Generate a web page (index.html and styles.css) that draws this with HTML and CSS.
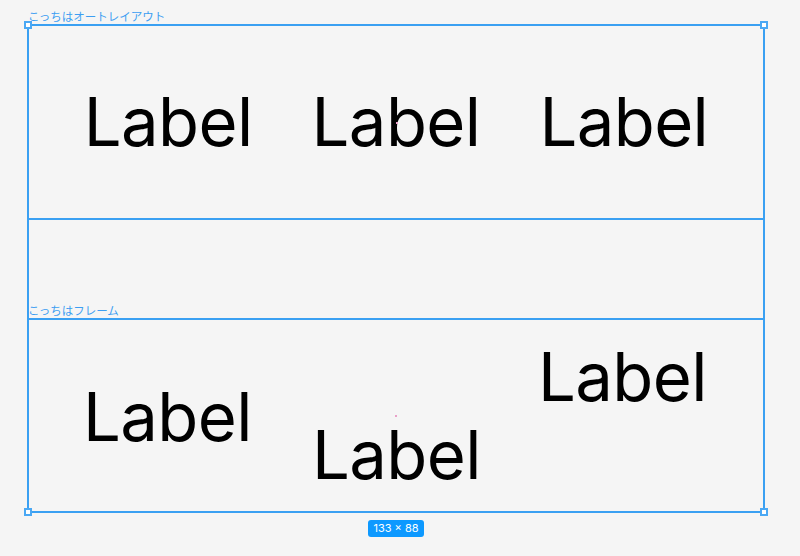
FILE: index.html
```html
<!DOCTYPE html>
<html lang="ja">
<head>
<meta charset="utf-8">
<title>Frames</title>
<link rel="stylesheet" href="styles.css">
</head>
<body>
<div class="canvas">
  <div class="frame-title">こっちはオートレイアウト</div>
  <div class="selection">
    <div class="frame auto">
      <span class="label">Label</span>
      <span class="label">Label</span>
      <span class="label">Label</span>
    </div>
    <div class="spacer">
      <div class="frame-title">こっちはフレーム</div>
    </div>
    <div class="frame free">
      <span class="label l1">Label</span>
      <span class="label l2">Label</span>
      <span class="label l3">Label</span>
      <span class="dot"></span>
    </div>
    <span class="handle tl"></span>
    <span class="handle tr"></span>
    <span class="handle bl"></span>
    <span class="handle br"></span>
    <span class="dot dot-top"></span>
  </div>
  <div class="badge-row"><span class="badge">133 × 88</span></div>
</div>
</body>
</html>
```
FILE: styles.css
```css
html, body {
  margin: 0;
  padding: 0;
  background: #f5f5f5;
}
body {
  width: 800px;
  height: 556px;
  overflow: hidden;
  font-family: Inter, "Noto Sans CJK JP", sans-serif;
}
.canvas {
  padding-top: 10px;
  padding-left: 27px;
}
.frame-title {
  font-family: Inter, "Noto Sans CJK JP", sans-serif;
  font-size: 11.5px;
  line-height: 14px;
  height: 14px;
  color: #3d9ef2;
  padding-left: 1px;
  white-space: nowrap;
}
.selection {
  position: relative;
  width: 738px;
  box-sizing: border-box;
  border: 2px solid #3aa0f2;
}
.auto {
  height: 192px;
  display: flex;
  align-items: center;
  justify-content: center;
  gap: 59px;
  padding-left: 0;
  border-bottom: 2px solid #3aa0f2;
}
.spacer {
  height: 98px;
  display: flex;
  align-items: flex-end;
  margin-left: -2px;
}
.free {
  position: relative;
  height: 191px;
  border-top: 2px solid #3aa0f2;
}
.label {
  font-family: Inter, "Liberation Sans", sans-serif;
  font-size: 67px;
  line-height: 68px;
  letter-spacing: -0.6px;
  color: #000;
  white-space: nowrap;
}
.free .label {
  position: absolute;
}
.l1 { left: 54px; top: 63px; }
.l2 { left: 283px; top: 101px; }
.l3 { left: 509px; top: 23px; }
.handle {
  position: absolute;
  width: 8px;
  height: 8px;
  box-sizing: border-box;
  background: #fff;
  border: 2px solid #4aa8f4;
}
.tl { left: -5px; top: -5px; }
.tr { right: -5px; top: -5px; }
.bl { left: -5px; bottom: -5px; }
.br { right: -5px; bottom: -5px; }
.dot {
  position: absolute;
  width: 2px;
  height: 2px;
  background: #e9a0c8;
}
.free .dot { left: 366px; top: 95px; }
.dot-top { left: 367px; top: 96px; }
.badge-row {
  width: 738px;
  display: flex;
  justify-content: center;
  padding-top: 7px;
}
.badge {
  background: #0d99ff;
  color: #fff;
  font-family: Inter, sans-serif;
  font-size: 11px;
  line-height: 17px;
  height: 17px;
  padding: 0 5px;
  border-radius: 3px;
}
```
